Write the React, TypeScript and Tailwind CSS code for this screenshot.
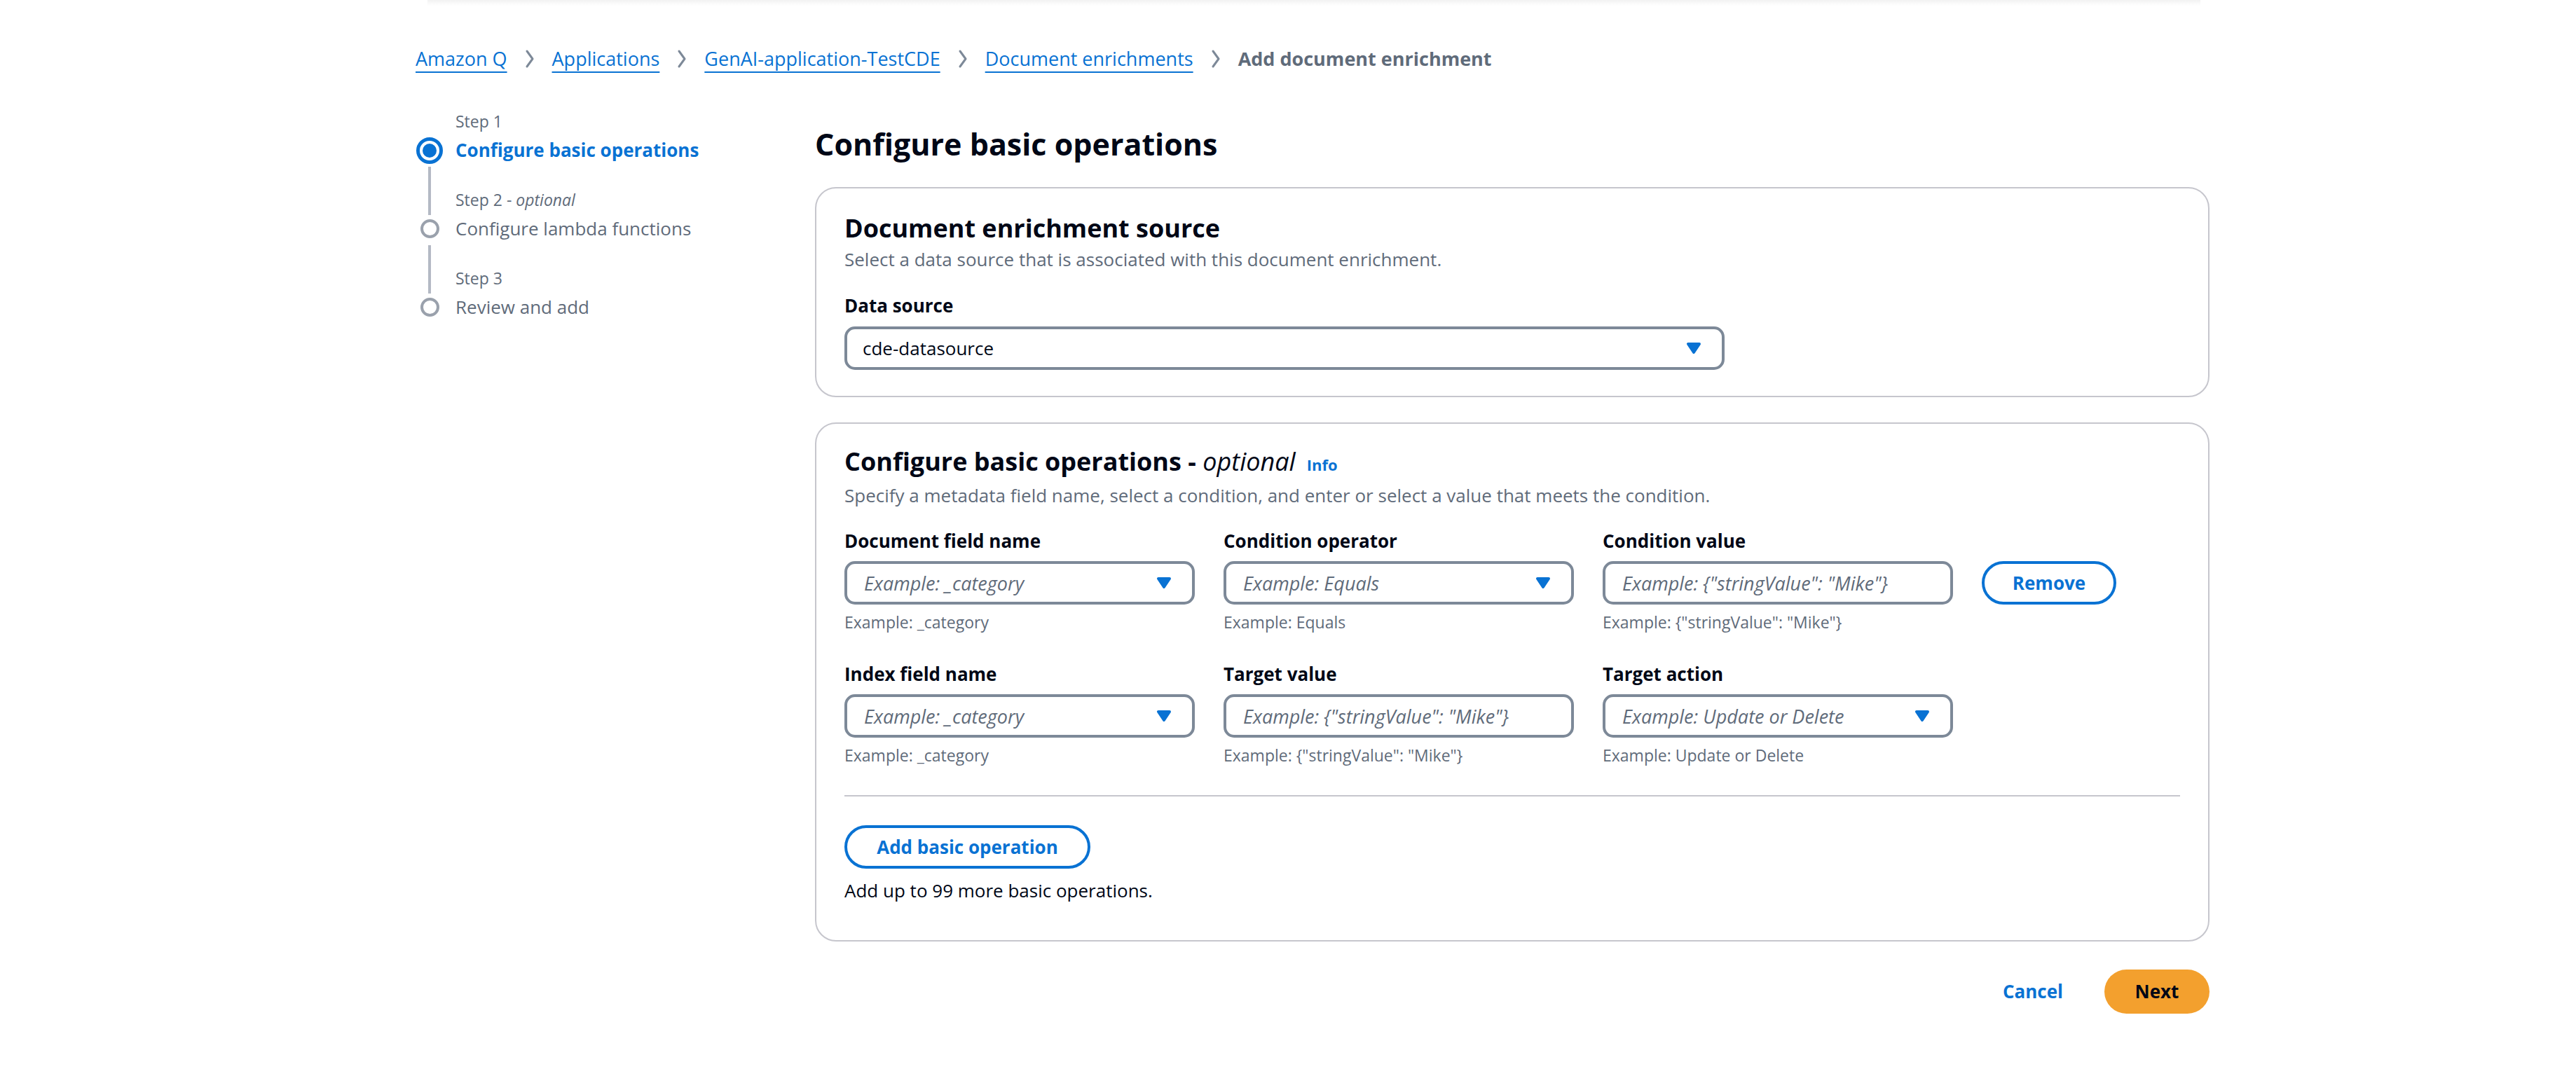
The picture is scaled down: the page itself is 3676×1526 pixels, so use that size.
import React from 'react';

const BLUE = '#0972d3';

function Chevron() {
  return (
    <svg width="16" height="28" viewBox="0 0 16 28" className="mx-[24px] shrink-0">
      <path d="M4 3 L12 14 L4 25" fill="none" stroke="#7d8998" strokeWidth="3" strokeLinecap="round" strokeLinejoin="round" />
    </svg>
  );
}

function Caret() {
  return (
    <svg width="32" height="32" viewBox="0 0 16 16" className="shrink-0">
      <path d="M4 5h8l-4 6-4-6z" fill={BLUE} stroke={BLUE} strokeWidth="2" strokeLinejoin="round" />
    </svg>
  );
}

function Field({
  label,
  placeholder,
  value,
  select,
  hint,
}: {
  label: string;
  placeholder?: string;
  value?: string;
  select?: boolean;
  hint?: string;
}) {
  return (
    <div className="flex flex-col w-[500px]">
      <div className="text-[26px] leading-[37px] font-bold text-[#000716]">{label}</div>
      <div className="mt-[10px] flex items-center justify-between h-[62px] rounded-[15px] border-[4px] border-[#7d8998] bg-white pl-[24px] pr-[24px]">
        <span className={value ? 'text-[#000716]' : 'italic text-[27px] text-[#5f6b7a]'}>{value ?? placeholder}</span>
        {select && <Caret />}
      </div>
      {hint && <div className="mt-[10px] text-[23px] leading-[30px] text-[#5f6b7a]">{hint}</div>}
    </div>
  );
}

const steps = [
  { label: 'Step 1', title: 'Configure basic operations', active: true },
  { label: 'Step 2', optional: true, title: 'Configure lambda functions' },
  { label: 'Step 3', title: 'Review and add' },
];

export default function App() {
  return (
    <div className="min-h-screen bg-white font-['Open_Sans','Noto_Sans',sans-serif] text-[26px] leading-[37px] text-[#000716]">
      {/* header shadow */}
      <div className="ml-[610px] w-[2530px] h-[8px] bg-gradient-to-b from-[#f2f2f2] to-white" />

      <div className="pl-[593px]">
        {/* Breadcrumb */}
        <nav className="mt-[56px] flex items-center text-[27px] leading-[40px]">
          {['Amazon Q', 'Applications', 'GenAI-application-TestCDE', 'Document enrichments'].map((c) => (
            <React.Fragment key={c}>
              <a className="text-[#0972d3] underline decoration-2 underline-offset-[8px]">{c}</a>
              <Chevron />
            </React.Fragment>
          ))}
          <span className="font-bold text-[#5f6b7a]">Add document enrichment</span>
        </nav>

        <div className="flex items-start">
          {/* Wizard steps */}
          <aside className="w-[570px] mt-[54px] shrink-0">
            {steps.map((s, i) => (
              <div key={s.label} className="flex h-[112px]">
                <div className="w-[40px] flex flex-col items-center">
                  <div className={`h-[37px] w-[4px] ${i > 0 ? 'bg-[#b4b9c4]' : ''}`} />
                  <div className="h-[39px] flex items-center justify-center">
                    {s.active ? (
                      <div className="w-[38px] h-[38px] rounded-full border-[5px] border-[#0972d3] flex items-center justify-center">
                        <div className="w-[20px] h-[20px] rounded-full bg-[#0972d3]" />
                      </div>
                    ) : (
                      <div className="w-[27px] h-[27px] rounded-full border-[4px] border-[#9aa1ac]" />
                    )}
                  </div>
                  {i < steps.length - 1 && <div className="mt-[4px] h-[32px] w-[4px] bg-[#b4b9c4]" />}
                </div>
                <div className="ml-[17px]">
                  <div className="text-[23px] leading-[30px] text-[#5f6b7a]">
                    {s.label}
                    {s.optional && (
                      <>
                        {' - '}
                        <i>optional</i>
                      </>
                    )}
                  </div>
                  <div
                    className={`mt-[8px] leading-[37px] ${
                      s.active ? 'font-bold text-[#0972d3]' : 'text-[#5f6b7a]'
                    }`}
                  >
                    {s.title}
                  </div>
                </div>
              </div>
            ))}
          </aside>

          {/* Main */}
          <main className="w-[1990px] mt-[76px]">
            <h1 className="text-[43px] leading-[52px] font-bold">Configure basic operations</h1>

            {/* Card 1 */}
            <section className="mt-[35px] rounded-[30px] border-2 border-[#c6c6cd] px-[40px] pt-[33px] pb-[37px]">
              <h2 className="text-[36px] leading-[48px] font-bold">Document enrichment source</h2>
              <p className="leading-[40px] text-[#5f6b7a]">Select a data source that is associated with this document enrichment.</p>
              <div className="mt-[28px] font-bold">Data source</div>
              <div className="mt-[11px] w-[1256px] flex items-center justify-between h-[62px] rounded-[15px] border-[4px] border-[#7d8998] pl-[22px] pr-[24px]">
                <span>cde-datasource</span>
                <Caret />
              </div>
            </section>

            {/* Card 2 */}
            <section className="mt-[36px] rounded-[30px] border-2 border-[#c6c6cd] px-[40px] pt-[30px] pb-[52px]">
              <h2 className="flex items-baseline text-[36px] leading-[48px] font-bold">
                <span>
                  Configure basic operations - <i className="font-normal">optional</i>
                </span>
                <a className="ml-[16px] text-[22px] font-bold text-[#0972d3]">Info</a>
              </h2>
              <p className="leading-[40px] text-[#5f6b7a]">
                Specify a metadata field name, select a condition, and enter or select a value that meets the condition.
              </p>

              <div className="mt-[27px] flex items-start gap-[41px]">
                <Field label="Document field name" placeholder="Example: _category" select hint="Example: _category" />
                <Field label="Condition operator" placeholder="Example: Equals" select hint="Example: Equals" />
                <Field
                  label="Condition value"
                  placeholder={'Example: {"stringValue": "Mike"}'}
                  hint={'Example: {"stringValue": "Mike"}'}
                />
                <button className="mt-[47px] w-[192px] h-[62px] rounded-full border-[4px] border-[#0972d3] font-bold text-[#0972d3]">
                  Remove
                </button>
              </div>

              <div className="mt-[41px] flex items-start gap-[41px]">
                <Field label="Index field name" placeholder="Example: _category" select hint="Example: _category" />
                <Field
                  label="Target value"
                  placeholder={'Example: {"stringValue": "Mike"}'}
                  hint={'Example: {"stringValue": "Mike"}'}
                />
                <Field label="Target action" placeholder="Example: Update or Delete" select hint="Example: Update or Delete" />
              </div>

              <div className="mt-[42px] h-[2px] bg-[#c6c6cd]" />

              <button className="mt-[41px] w-[351px] h-[62px] rounded-full border-[4px] border-[#0972d3] font-bold text-[#0972d3]">
                Add basic operation
              </button>
              <p className="mt-[13px]">Add up to 99 more basic operations.</p>
            </section>

            {/* Footer */}
            <div className="mt-[40px] flex justify-end items-center gap-[22px]">
              <button className="px-[37px] h-[63px] font-bold text-[#0972d3]">Cancel</button>
              <button className="w-[150px] h-[63px] rounded-full bg-[#f3a02e] font-bold text-[#000716]">Next</button>
            </div>
          </main>
        </div>
      </div>
    </div>
  );
}
